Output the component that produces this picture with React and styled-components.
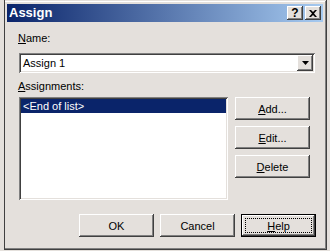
import React from 'react'
import styled, { createGlobalStyle, css } from 'styled-components'

const FACE = '#e4e0dc'

const GlobalStyle = createGlobalStyle`
  html, body {
    margin: 0;
    padding: 0;
    background: ${FACE};
  }
  body {
    font-family: 'Liberation Sans', Arial, sans-serif;
    font-size: 11px;
    color: #000;
  }
`

const raised = css`
  background: ${FACE};
  box-shadow: inset -1px -1px #404040, inset 1px 1px #fff,
    inset -2px -2px #808080, inset 2px 2px ${FACE};
`

const sunken = css`
  box-shadow: inset 1px 1px #808080, inset -1px -1px #fff,
    inset 2px 2px #404040, inset -2px -2px ${FACE};
`

const Window = styled.div`
  box-sizing: border-box;
  width: 323px;
  height: 250px;
  margin-left: 4px;
  padding: 2px;
  background: ${FACE};
  box-shadow: inset -1px -1px #404040, inset 1px 0 #404040,
    inset 0 1px ${FACE}, inset -2px -2px #808080, inset 0 2px #fff;
  display: flex;
  flex-direction: column;
`

const TitleBar = styled.div`
  margin: 2px 2px 0 1px;
  height: 18px;
  display: flex;
  align-items: center;
  padding: 0 2px;
  background: linear-gradient(to right, #0a246a, #a6caf0);
`

const Title = styled.span`
  flex: 1;
  color: #fff;
  font-weight: bold;
  font-size: 13px;
  line-height: 18px;
`

const CaptionButton = styled.div`
  ${raised};
  box-sizing: border-box;
  width: 16px;
  height: 14px;
  margin-left: ${props => (props.gap ? '2px' : '0')};
  display: flex;
  align-items: center;
  justify-content: center;
  font-weight: bold;
  font-size: 12px;
  line-height: 14px;
`

const Content = styled.div`
  display: flex;
  flex-direction: column;
  padding: 0 10px 0 13px;
`

const Label = styled.div`
  line-height: 13px;
  margin-top: ${props => props.mt}px;
  margin-left: -1px;
`

const Key = styled.span`
  text-decoration: underline;
`

const Combo = styled.div`
  ${sunken};
  box-sizing: border-box;
  margin-top: 8px;
  height: 20px;
  background: #fff;
  display: flex;
  align-items: center;
  padding: 2px;
`

const ComboText = styled.span`
  flex: 1;
  padding-left: 2px;
  line-height: 16px;
`

const DropButton = styled.div`
  ${raised};
  box-sizing: border-box;
  width: 16px;
  height: 16px;
  display: flex;
  align-items: center;
  justify-content: center;
`

const Row = styled.div`
  display: flex;
  gap: 7px;
  margin-top: 4px;
`

const ListBox = styled.div`
  ${sunken};
  box-sizing: border-box;
  width: 209px;
  height: 103px;
  background: #fff;
  padding: 2px;
`

const ListItem = styled.div`
  height: 14px;
  line-height: 14px;
  padding-left: 2px;
  background: ${props => (props.selected ? '#0a246a' : 'transparent')};
  color: ${props => (props.selected ? '#fff' : '#000')};
`

const ButtonColumn = styled.div`
  display: flex;
  flex-direction: column;
  gap: 6px;
`

const Button = styled.div`
  ${raised};
  box-sizing: border-box;
  width: 75px;
  height: 23px;
  display: flex;
  align-items: center;
  justify-content: center;
  position: relative;
  ${props =>
    props.isDefault &&
    css`
      box-shadow: inset 0 0 0 1px #000, inset -2px -2px #404040,
        inset 2px 2px #fff, inset -3px -3px #808080;
    `}
`

const FocusRing = styled.span`
  position: absolute;
  inset: 4px;
  border: 1px dotted #000;
`

const BottomRow = styled.div`
  display: flex;
  justify-content: flex-end;
  gap: 6px;
  margin-top: 14px;
  margin-right: -1px;
`

export default function App() {
  return (
    <>
      <GlobalStyle />
      <Window>
        <TitleBar>
          <Title>Assign</Title>
          <CaptionButton>?</CaptionButton>
          <CaptionButton gap>
            <svg width='8' height='7' viewBox='0 0 8 7'>
              <path d='M0 0h2l2 2 2-2h2L5 3.5 8 7H6L4 5 2 7H0l3-3.5z' fill='#000' />
            </svg>
          </CaptionButton>
        </TitleBar>
        <Content>
          <Label mt={10}>
            <Key>N</Key>ame:
          </Label>
          <Combo>
            <ComboText>Assign 1</ComboText>
            <DropButton>
              <svg width='7' height='4' viewBox='0 0 7 4'>
                <path d='M0 0h7L3.5 4z' fill='#000' />
              </svg>
            </DropButton>
          </Combo>
          <Label mt={7}>
            <Key>A</Key>ssignments:
          </Label>
          <Row>
            <ListBox>
              <ListItem selected>&lt;End of list&gt;</ListItem>
            </ListBox>
            <ButtonColumn>
              <Button>
                <span><Key>A</Key>dd...</span>
              </Button>
              <Button>
                <span><Key>E</Key>dit...</span>
              </Button>
              <Button>
                <span><Key>D</Key>elete</span>
              </Button>
            </ButtonColumn>
          </Row>
          <BottomRow>
            <Button>OK</Button>
            <Button>Cancel</Button>
            <Button isDefault>
              <FocusRing />
              <span><Key>H</Key>elp</span>
            </Button>
          </BottomRow>
        </Content>
      </Window>
    </>
  )
}
